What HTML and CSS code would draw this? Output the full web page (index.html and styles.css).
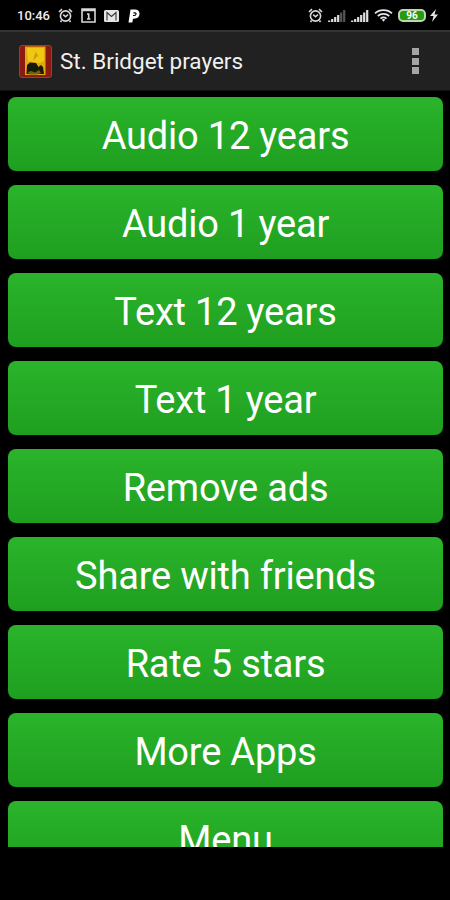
FILE: index.html
```html
<!DOCTYPE html>
<html lang="en">
<head>
    <meta charset="UTF-8">
    <meta name="viewport" content="width=device-width, initial-scale=1.0">
    <title>St. Bridget prayers</title>
    <link rel="stylesheet" href="styles.css">
</head>

<body>
    <!-- status bar -->
    <div class="status-bar">
        <div class="status-left">
            <span class="clock">10:46</span>
            <svg class="alarm" width="15" height="15" viewBox="0 0 15 15">
                <circle cx="7.5" cy="8" r="5.1"/>
                <path d="M1 4 L4 1.2 M14 4 L11 1.2 M5.2 6.7 L7.5 8.8 L10 6.7 M3.5 12.5 L2.5 14 M11.5 12.5 L12.5 14"/>
            </svg>
            <svg class="calendar" width="15" height="15" viewBox="0 0 15 15">
                <path d="M1 1 H14 V14 H1 Z M1 2.5 H14"/>
                <path d="M6 6 H7.7 V11 M6 11 H9.4"/>
            </svg>
            <svg class="mail" width="15" height="12" viewBox="0 0 15 12">
                <rect x="0" y="0" width="15" height="12" rx="1.5" fill="#e6e6e6"/>
                <path d="M3 10.5 V2.5 L7.5 6.5 L12 2.5 V10.5" fill="none" stroke="#333" stroke-width="1.1"/>
            </svg>
            <svg class="pandora" width="12" height="14" viewBox="0 0 12 14">
                <path d="M2.5 0.5 H7 C10 .5 11.5 2.2 11.5 4.8 C11.5 8 9.2 9.7 6 9.7 H5 L4.3 13.5 H.5 Z" fill="#fff"/>
                <path d="M5.4 3.8 H7 C8.8 3.8 8 6.5 6.4 6.5 H5" fill="none" stroke="#000" stroke-width="1.2"/>
            </svg>
        </div>
        <div class="status-right">
            <svg class="alarm" width="15" height="15" viewBox="0 0 15 15">
                <circle cx="7.5" cy="8" r="5.1"/>
                <path d="M1 4 L4 1.2 M14 4 L11 1.2 M5.2 6.7 L7.5 8.8 L10 6.7 M3.5 12.5 L2.5 14 M11.5 12.5 L12.5 14"/>
            </svg>
            <svg class="signal" width="18" height="12" viewBox="0 0 18 12">
                <path d="M1.2 12 V10.5 M4.2 12 V9 M7.2 12 V7 M10.2 12 V5" stroke="#ddd"/>
                <path d="M13.2 12 V2.5 M16.2 12 V0" stroke="#555"/>
            </svg>
            <svg class="signal" width="18" height="12" viewBox="0 0 18 12">
                <path d="M1.2 12 V10.5 M4.2 12 V9 M7.2 12 V7 M10.2 12 V5 M13.2 12 V2.5 M16.2 12 V0" stroke="#ddd"/>
            </svg>
            <svg class="wifi" width="19" height="13" viewBox="0 0 19 13">
                <path d="M1 4.3 C5.5 0 13.5 0 18 4.3 M3.8 7 C7 4.2 12 4.2 15.2 7 M6.5 9.6 C8.2 8.2 10.8 8.2 12.5 9.6"/>
                <path d="M7.7 10.6 Q9.5 9.3 11.3 10.6 L9.5 12.8 Z" fill="#e6e6e6" stroke="none"/>
            </svg>
            <div class="battery">96</div>
            <svg class="bolt" width="8" height="13" viewBox="0 0 8 13">
                <path d="M6 0 L0 7 H3.5 L2 13 L8 5.5 H4.5 Z" fill="#e6e6e6"/>
            </svg>
        </div>
    </div>

    <!-- action bar -->
    <header class="action-bar">
        <svg class="app-icon" width="33" height="33" viewBox="0 0 33 33">
            <rect x=".5" y=".5" width="32" height="32" rx="2.5" fill="#8d1910" stroke="#77512e"/>
            <rect x="6" y="1.5" width="20.5" height="28.5" fill="#e0a90f"/>
            <path d="M8 3 H25 V16 L20 18 L9 16 Z" fill="#f0c812"/>
            <path d="M17 6 L18 9 L19.5 11 L17.5 12 L14 16 L15.5 10 Z" fill="#cf9d0b"/>
            <path d="M7.5 29 L8 20 L11 17.5 L17 18 L19.5 22 L22 20 L24 22 L25 29 Z" fill="#17190a"/>
            <path d="M9 27 L12 26 L16 27.5 L20 25 L22 28 L18 29.5 H10 Z" fill="#6e6410"/>
        </svg>
        <h1 class="title">St. Bridget prayers</h1>
        <div class="overflow">
            <i></i><i></i><i></i>
        </div>
    </header>

    <!-- menu list -->
    <main class="list">
        <button class="item">Audio 12 years</button>
        <button class="item">Audio 1 year</button>
        <button class="item">Text 12 years</button>
        <button class="item">Text 1 year</button>
        <button class="item">Remove ads</button>
        <button class="item">Share with friends</button>
        <button class="item">Rate 5 stars</button>
        <button class="item">More Apps</button>
        <button class="item">Menu</button>
    </main>
</body>
</html>
```
FILE: styles.css
```css
* {
    box-sizing: border-box;
}

body {
    margin: 0;
    width: 450px;
    height: 900px;
    overflow: hidden;
    background: #000;
    color: #fff;
    font-family: Roboto, "Liberation Sans", sans-serif;
}

svg {
    display: block;
    flex: none;
}

/* status bar */
.status-bar {
    display: flex;
    justify-content: space-between;
    height: 30px;
    padding: 1px 12px 0 17px;
}

.status-left,
.status-right {
    display: flex;
    align-items: center;
}

.clock {
    width: 41px;
    font-size: 13px;
    font-weight: 500;
    color: #eee;
}

.alarm,
.calendar {
    fill: none;
    stroke: #d8d8d8;
    stroke-width: 1.6;
}

.calendar {
    margin-left: 8px;
}

.mail {
    margin-left: 8px;
}

.pandora {
    margin-left: 9px;
}

.signal {
    margin-left: 5px;
    stroke-width: 2.2;
}

.wifi {
    margin-left: 5px;
    fill: none;
    stroke: #e6e6e6;
    stroke-width: 1.7;
}

.battery {
    width: 28px;
    height: 13px;
    margin-left: 5px;
    border: 2px solid #b9d8b0;
    border-radius: 5px;
    background: #279b10;
    font-size: 10px;
    font-weight: 700;
    line-height: 9px;
    text-align: center;
}

.bolt {
    margin-left: 4px;
}

/* action bar */
.action-bar {
    display: flex;
    align-items: center;
    height: 61px;
    padding: 0 31px 0 19px;
    border-top: 2px solid #333;
    border-bottom: 1px solid #111;
    background: #212121;
}

.title {
    flex: 1;
    margin: 0 0 0 8px;
    font-size: 22.5px;
    font-weight: 400;
    color: #f0f0f0;
}

.overflow {
    display: flex;
    flex-direction: column;
    gap: 2.5px;
}

.overflow i {
    width: 7px;
    height: 7px;
    background: #a5a5a5;
}

/* buttons */
.list {
    display: flex;
    flex-direction: column;
    gap: 14px;
    height: 756px;
    padding: 6px 7px 0 8px;
    overflow: hidden;
}

.item {
    flex: none;
    height: 74px;
    padding: 3px 0 0;
    border: none;
    border-radius: 8px;
    background: linear-gradient(#2ab42b, #1f9f20);
    color: #fff;
    font-family: inherit;
    font-size: 38px;
    letter-spacing: -0.2px;
}
```
